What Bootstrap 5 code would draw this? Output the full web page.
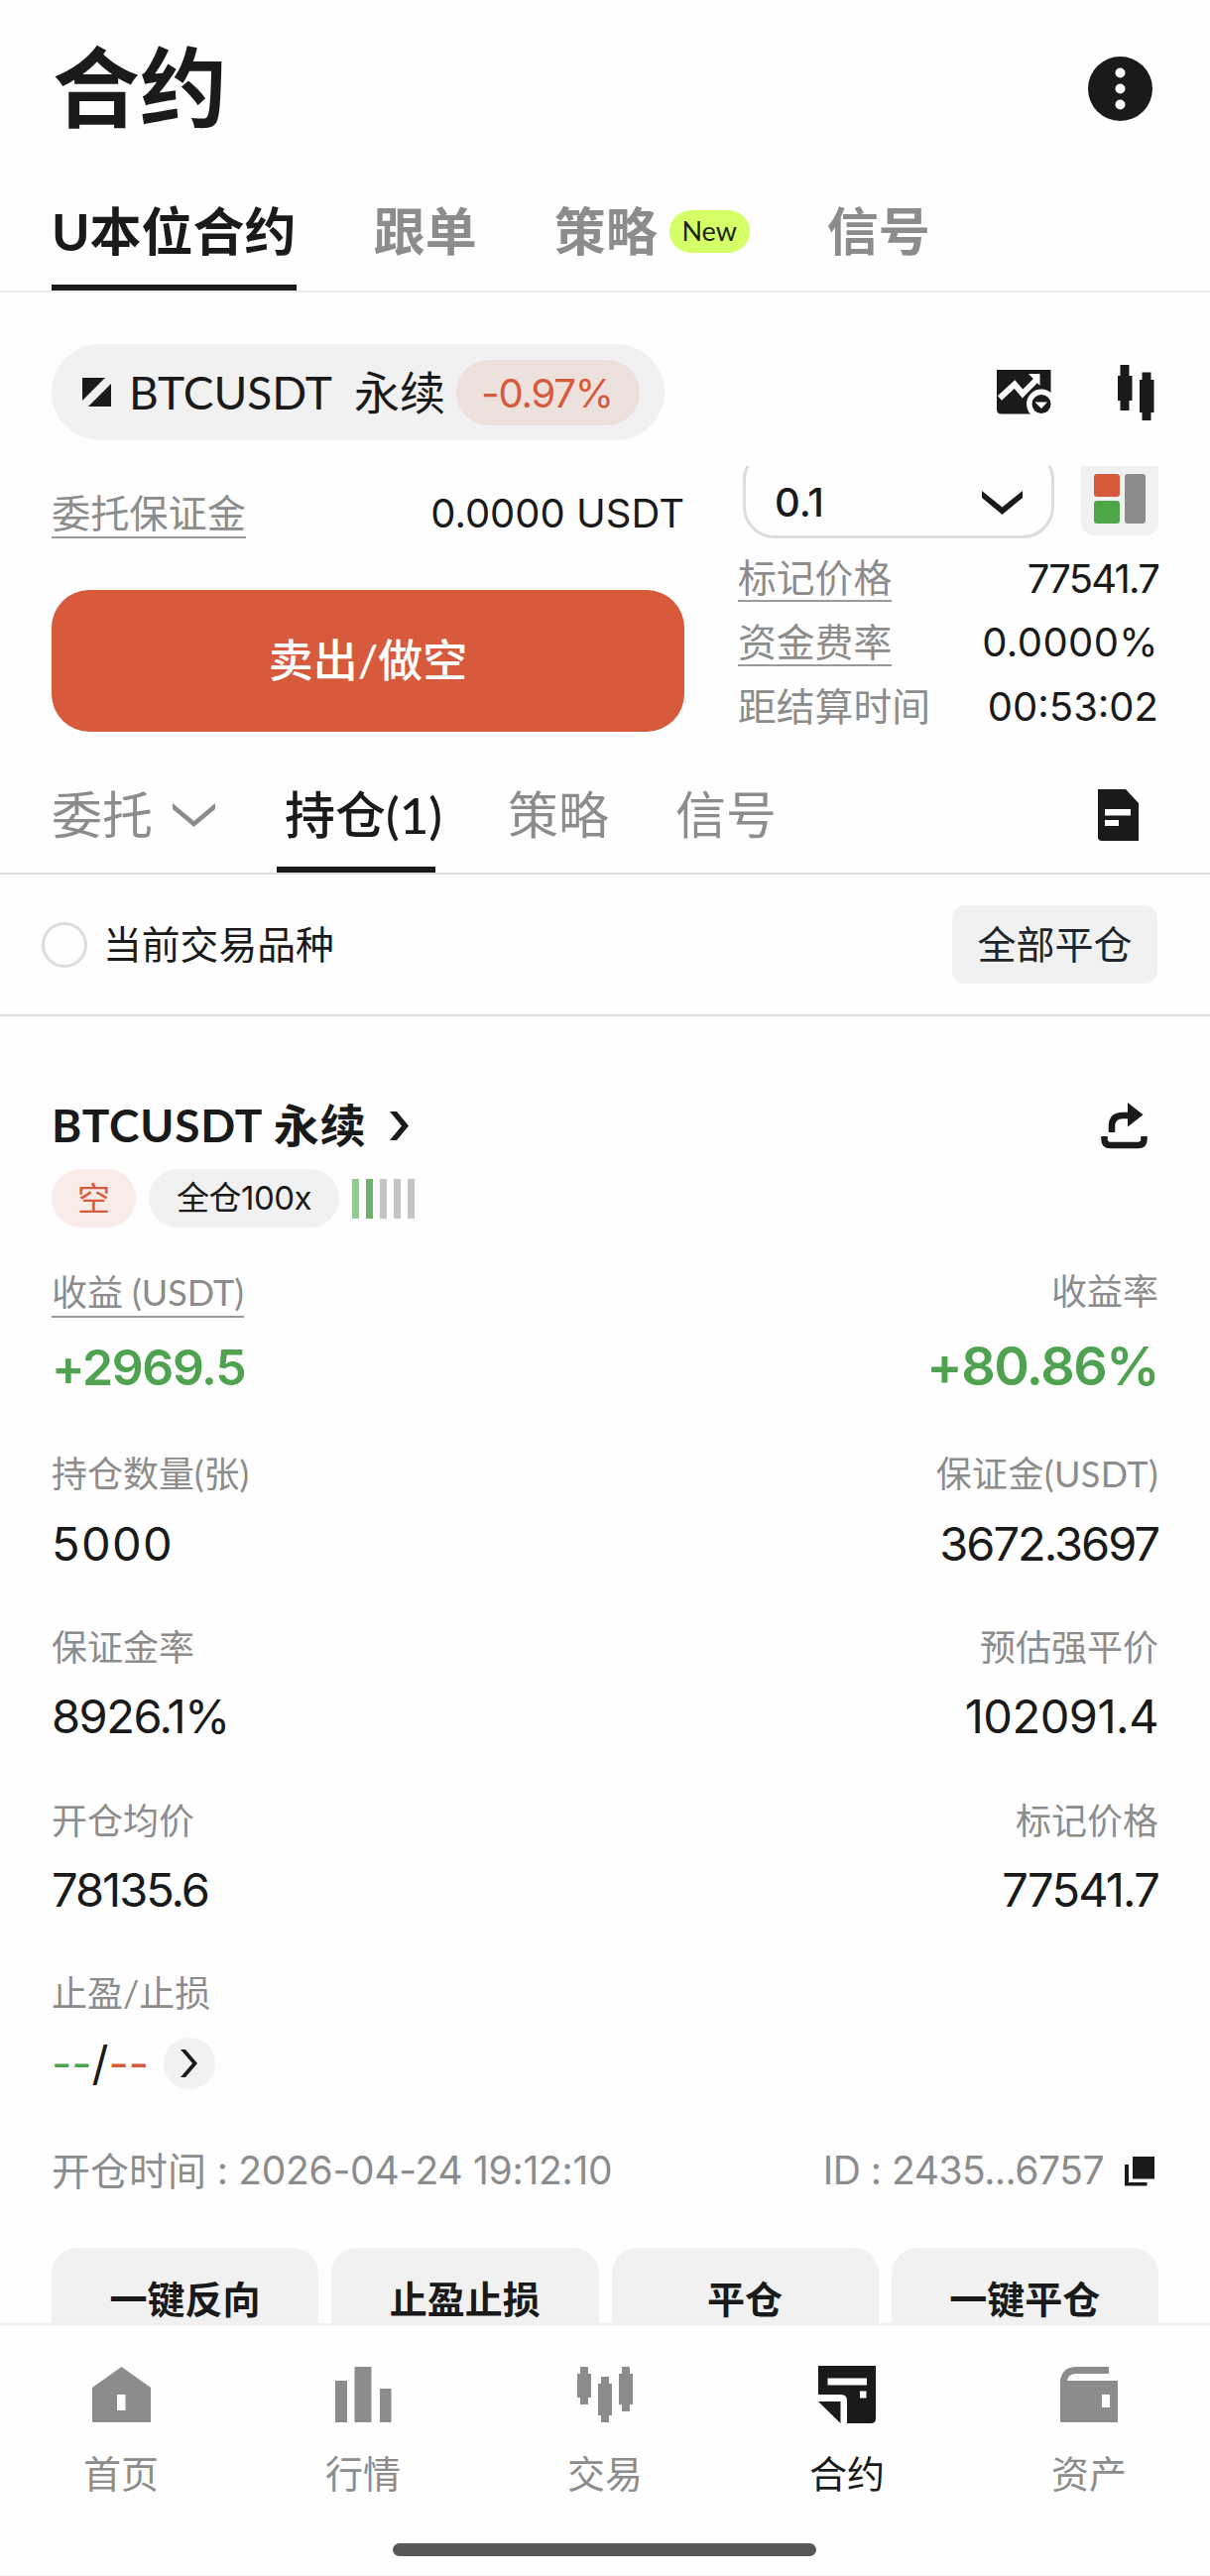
<!DOCTYPE html>
<html lang="zh-CN">
<head>
<meta charset="utf-8">
<meta name="viewport" content="width=device-width, initial-scale=1">
<title>合约</title>
<link href="https://cdn.jsdelivr.net/npm/bootstrap@5.3.0/dist/css/bootstrap.min.css" rel="stylesheet">
<style>
:root{--ink:#1a1a1a;--dim:#8c8c8c;--soft:#f1f1f1;--up:#4fa24f;--down:#d65a3b}
body{font-family:Lato,"Noto Sans CJK SC",sans-serif;color:var(--ink);background:#fefefe;line-height:1.2;overflow:hidden}
svg{display:block;flex:none;fill:currentColor}
.num{font-family:Inter,"Noto Sans CJK SC",sans-serif}
.phone{width:1220px;height:2598px}
.screen{height:2343px;overflow:hidden}
.gut{padding-left:52px;padding-right:52px}
.dim{color:var(--dim)}
.ink{color:var(--ink)}
.up{color:var(--up)}
.down{color:var(--down)}
/* header */
.top{height:178px;padding-right:58px}
.top h1{font-size:88px;font-weight:700;line-height:1;padding:0 0 4px 1px}
.tabs-main{height:117px;border-bottom:2px solid #eee;gap:78px}
.tabs-main a,.tabs-sub a{color:var(--dim);text-decoration:none;border-bottom:6px solid transparent;white-space:nowrap}
.tabs-main a{font-size:52px;font-weight:700;height:115px;padding-top:2px}
.tabs-main a.on,.tabs-sub a.on{color:var(--ink);border-color:var(--ink)}
.tag-new{font-size:27px;font-weight:400;color:#1c2410;background:#d5ff66;width:81px;height:43px;border-radius:22px;margin-left:12px}
/* pair */
.pairrow{padding-top:52px}
.pairpill{height:97px;width:618px;border-radius:49px;background:var(--soft);padding-left:31px;padding-right:25px;font-size:46px}
.pairname{margin-left:18px}
.chg{width:185px;height:66px;border-radius:33px;background:#ede1de;font-size:40px;letter-spacing:-1.2px;padding:3px 2px 0 0}
.candles{margin-left:67px}
/* trade */
.trade{padding-top:26px;height:294px}
.colL{width:638px}
.margin{height:96px;margin-bottom:29px;font-size:40px}
.lbl{font-size:39.2px}
.dotted{border-bottom:2px solid #999}
.sell{height:143px;border-radius:38px;background:var(--down);color:#fff;font-size:45px;font-weight:500}
.colR{width:424px}
.clip{height:73px;overflow:hidden}
.picker{width:314px;height:91px;margin-top:-18px;border:3px solid #dcdcdc;border-radius:32px;padding:18px 29px 0 29px;font-size:40px;font-weight:500;margin-left:5px}
.gridbtn{width:78px;height:88px;margin-top:-18px;border-radius:14px;background:var(--soft);padding:26px 0 0 13px}
.info{height:64.7px;font-size:38.8px;line-height:1.16}
.info .num{font-size:40px;padding-top:1px}
.infos{padding-top:8px}
/* lower tabs */
.tabs-sub{height:144px;border-bottom:2px solid #dedede;font-size:51px;padding-right:72px}
.tabs-sub a{height:142px;padding-top:31px}
.tabs-sub .arrow{margin-left:20px}
.tabs-sub .cur{margin-left:62px;width:160px;padding-left:8px}
.tabs-sub .nxt{margin-left:73px}
.tabs-sub .nxt2{margin-left:67px}
.docicon{margin-top:58px}
.filter{height:143px;border-bottom:2px solid #dedede;padding:0 53px 0 42px;font-size:38.8px}
.ring{width:46px;height:46px;border:3px solid #dcdcdc;border-radius:50%;margin-right:16px}
.closeall{width:207px;height:79px;border-radius:13px;background:var(--soft);font-size:39px}
/* position */
.phead{height:88px;margin-top:66px;padding-right:10px;font-size:46px;font-weight:700}
.phead span{letter-spacing:.8px}
.chips{height:59px;margin-bottom:40px;font-size:33px}
.chip{border-radius:30px;height:59px;background:var(--soft)}
.chip-s{width:85px;background:#f8ebe8;margin-right:13px}
.chip-l{width:192px;margin-right:13px}
.lv{gap:7px}
.lv i{display:block;width:7px;height:40px;background:#c4c4c4}
.lv i.a{background:#8ecf8e}.lv i.b{background:#68b368}
.stat{height:174.7px;font-size:36px}
.stat.first{height:184px}
.stat .k{height:50px}
.stat .v{height:90px;font-size:47px}
.stat.first .v{height:101px;font-weight:600}
.stat.first .big1{font-size:50px;letter-spacing:-1.4px}
.stat.first .big2{font-size:54px;letter-spacing:-1.5px}
.pnl{margin-top:5px;padding-bottom:2px}
.dashes{font-size:44px}
.go{width:52px;height:52px;border-radius:50%;background:var(--soft);margin-left:15px}
.timerow{height:66px;margin-top:-4px;font-size:39px}
.tm{white-space:pre}
.cp{margin-left:21px;margin-right:4px}
.acts{margin-top:44px;gap:13px}
.acts .btn{height:104px;border-radius:26px;background:var(--soft);font-size:38px;font-weight:700;color:var(--ink);border:0;padding:0}
/* bottom bar */
.dock{height:255px;border-top:2px solid #f0f0f0;border-bottom:1px solid #f3f3f3;position:relative}
.dock a{width:244px;padding-top:41px;color:var(--dim);text-decoration:none;font-size:38px}
.dock a.on{color:var(--ink)}
.dock svg{margin-bottom:28px}
.homebar{width:427px;height:13px;border-radius:7px;background:#585858;bottom:19px;left:396px}
/* tracking */
.s3{letter-spacing:-.3px}.s5{letter-spacing:-.5px}.s15{letter-spacing:-1.5px}.s17{letter-spacing:-1.8px}.s20{letter-spacing:-2px}.p15{letter-spacing:1.4px}.p4{letter-spacing:.4px}
</style>
<script src="https://cdn.jsdelivr.net/npm/bootstrap@5.3.0/dist/js/bootstrap.bundle.min.js"></script>
</head>
<body>
<div class="phone d-flex flex-column">
<main class="screen">
  <header class="top gut d-flex align-items-center justify-content-between">
    <h1 class="m-0">合约</h1>
    <svg width="65" height="65" viewBox="0 0 65 65"><circle cx="32.5" cy="32.5" r="32.5"/><g fill="#fff"><circle cx="32.5" cy="16.5" r="5"/><circle cx="32.5" cy="32.5" r="5"/><circle cx="32.5" cy="48.5" r="5"/></g></svg>
  </header>
  <nav class="tabs-main gut d-flex">
    <a href="#" class="on d-flex align-items-center">U本位合约</a>
    <a href="#" class="d-flex align-items-center">跟单</a>
    <a href="#" class="d-flex align-items-center">策略<span class="tag-new d-flex align-items-center justify-content-center">New</span></a>
    <a href="#" class="d-flex align-items-center">信号</a>
  </nav>

  <section class="pairrow gut d-flex align-items-center justify-content-between">
    <div class="pairpill d-flex align-items-center">
      <svg width="29" height="29" viewBox="0 0 29 29"><path d="M0 0H23L0 23zM29 6V29H6z"/></svg>
      <span class="pairname text-nowrap">BTCUSDT&nbsp; 永续</span>
      <span class="chg num down ms-auto d-flex align-items-center justify-content-center">-0.97%</span>
    </div>
    <div class="d-flex align-items-center pe-1">
      <svg width="55" height="46" viewBox="0 0 55 46"><path d="M0 0H54.5V44.500H5Q0 44.500 0 40z"/><path d="M3 28.500L18 14.500 26 24 40 10" fill="none" stroke="#fff" stroke-width="6"/><path d="M32 4H43.500V16z" fill="#fff"/><circle cx="45" cy="34.500" r="15" fill="#fff"/><circle cx="45" cy="34.500" r="9.500"/><path d="M38.500 32.500H51L45 39z" fill="#fff"/></svg>
      <svg class="candles" width="37" height="56" viewBox="0 0 37 56"><path d="M2.500 0h9v11H14.500V36h-3V46h-9V36H0V11H2.500zM24.500 7.500h9V15H36.500V48h-3v8h-9V48H22V15h2.500z"/></svg>
    </div>
  </section>

  <section class="trade gut d-flex justify-content-between">
    <div class="colL">
      <div class="margin d-flex align-items-center justify-content-between">
        <span class="lbl dim dotted">委托保证金</span><span class="num">0.0000 USDT</span>
      </div>
      <button class="sell btn w-100 p-0">卖出/做空</button>
    </div>
    <div class="colR">
      <div class="clip d-flex justify-content-between">
        <div class="picker num d-flex align-items-center justify-content-between">0.1
          <svg width="41" height="24" viewBox="0 0 41 24"><path d="M0 0V7L20.500 24 41 7V0L20.500 16.500z"/></svg></div>
        <div class="gridbtn"><svg width="52" height="51" viewBox="0 0 52 51"><rect width="26" height="23" rx="3" fill="#d65a3b"/><rect y="27" width="26" height="23" rx="3" fill="#4fa647"/><rect x="31" width="21" height="50" rx="3" fill="#8c8c8c"/></svg></div>
      </div>
      <div class="infos">
        <div class="info d-flex align-items-center justify-content-between"><span class="dim dotted">标记价格</span><span class="num s17">77541.7</span></div>
        <div class="info d-flex align-items-center justify-content-between"><span class="dim dotted">资金费率</span><span class="num p4">0.0000%</span></div>
        <div class="info d-flex align-items-center justify-content-between"><span class="dim">距结算时间</span><span class="num">00:53:02</span></div>
      </div>
    </div>
  </section>

  <nav class="tabs-sub gut d-flex">
    <a href="#" class="d-flex align-items-center">委托<svg class="arrow" width="43" height="24" viewBox="0 0 43 24"><path d="M0 0V6L21.500 24 43 6V0L21.500 18z"/></svg></a>
    <a href="#" class="on d-flex align-items-center fw-medium cur">持仓(1)</a>
    <a href="#" class="d-flex align-items-center nxt">策略</a>
    <a href="#" class="d-flex align-items-center nxt2">信号</a>
    <svg class="ms-auto docicon" width="41" height="52" viewBox="0 0 41 52"><path d="M0 0H28L41 14V52H4Q0 52 0 48z"/><path d="M7 20H33V26.500H7zM7 31H21V37H7z" fill="#fff"/></svg>
  </nav>

  <section class="filter d-flex align-items-center">
    <span class="ring"></span><span>当前交易品种</span>
    <button class="closeall btn p-0 ms-auto">全部平仓</button>
  </section>

  <section class="gut">
    <div class="phead d-flex align-items-center">
      <span>BTCUSDT 永续</span>
      <svg class="ms-4" width="19" height="29" viewBox="0 0 19 29"><path d="M0 0H7L19 14.500 7 29H0L12 14.500z"/></svg>
      <svg class="ms-auto" width="48" height="47" viewBox="0 0 48 47"><path d="M27 0L42.500 12.300 27 24.500z"/><path d="M11 30V24Q11 13 22 13H29M3.500 34v3q0 6 6 6h28q6 0 6-6v-3" fill="none" stroke="currentColor" stroke-width="6.500"/></svg>
    </div>
    <div class="chips d-flex align-items-center">
      <span class="chip chip-s down d-flex align-items-center justify-content-center">空</span>
      <span class="chip chip-l num s5 d-flex align-items-center justify-content-center">全仓100x</span>
      <span class="lv d-flex"><i class="a"></i><i class="b"></i><i></i><i></i><i></i></span>
    </div>

    <div class="stat first">
      <div class="k dim d-flex align-items-center justify-content-between"><span class="dotted pnl">收益 (USDT)</span><span>收益率</span></div>
      <div class="v num up d-flex align-items-center justify-content-between"><span class="big1">+2969.5</span><span class="big2">+80.86%</span></div>
    </div>
    <div class="stat">
      <div class="k dim d-flex align-items-center justify-content-between"><span>持仓数量(张)</span><span class="p4">保证金(USDT)</span></div>
      <div class="v num d-flex align-items-center justify-content-between"><span class="p15">5000</span><span class="s20">3672.3697</span></div>
    </div>
    <div class="stat">
      <div class="k dim d-flex align-items-center justify-content-between"><span>保证金率</span><span>预估强平价</span></div>
      <div class="v num d-flex align-items-center justify-content-between"><span class="s15">8926.1%</span><span class="s5">102091.4</span></div>
    </div>
    <div class="stat">
      <div class="k dim d-flex align-items-center justify-content-between"><span>开仓均价</span><span>标记价格</span></div>
      <div class="v num d-flex align-items-center justify-content-between"><span class="s20">78135.6</span><span class="s17">77541.7</span></div>
    </div>
    <div class="stat">
      <div class="k dim d-flex align-items-center"><span>止盈/止损</span></div>
      <div class="v num d-flex align-items-center"><span class="up dashes">--</span><span>/</span><span class="down dashes">--</span>
        <span class="go d-flex align-items-center justify-content-center"><svg width="17" height="28" viewBox="0 0 17 28"><path d="M0 0H5L17 14 5 28H0L12 14z"/></svg></span></div>
    </div>
    <div class="timerow dim d-flex align-items-center">
      <span>开仓时间</span><span class="num s3 tm">&nbsp;: 2026-04-24 19:12:10</span>
      <span class="num s5 ms-auto tm">ID : 2435...6757</span>
      <svg class="ink cp" width="30" height="30" viewBox="0 0 30 30"><path d="M8 0H30V22.500H8zM0 8H4V26H22.500V29.500H0z"/></svg>
    </div>
    <div class="acts d-flex">
      <button class="btn flex-fill w-25">一键反向</button><button class="btn flex-fill w-25">止盈止损</button><button class="btn flex-fill w-25">平仓</button><button class="btn flex-fill w-25">一键平仓</button>
    </div>
  </section>
</main>

<nav class="dock d-flex">
  <a href="#" class="d-flex flex-column align-items-center"><svg width="59" height="58" viewBox="0 -1 59 58"><path fill-rule="evenodd" d="M29.500 0L59 21V56H0V21zM25 28V44H33.500V28z"/></svg>首页</a>
  <a href="#" class="d-flex flex-column align-items-center"><svg width="57" height="58" viewBox="0 -1 57 58"><path d="M0 14H12V56H0zM19.500 0H36.500V56H19.500zM45 22H56.500V56H45z"/></svg>行情</a>
  <a href="#" class="d-flex flex-column align-items-center"><svg width="57" height="58" viewBox="0 -1 57 58"><path d="M3 0h8V7h3V31h-3v7H3V31H0V7H3zM24 10h8v7h3V49h-3v7H24V49H21V17h3zM45 0h8V7h3V38h-3v7H45V38H42V7h3z"/></svg>交易</a>
  <a href="#" class="on d-flex flex-column align-items-center"><svg width="58" height="58" viewBox="0 0 58 58"><path fill-rule="evenodd" d="M0 0H58V53Q58 58 53 58H29V35Q29 29 23 29H0zM9.500 12.500V19.500H49V12.500zM42 25.500V32.500H48.500V25.500z"/><path d="M0 36H22.500V58z"/></svg>合约</a>
  <a href="#" class="d-flex flex-column align-items-center"><svg width="58" height="58" viewBox="0 -1 58 58"><path fill-rule="evenodd" d="M49 0V7H15Q8 7.500 7 14H58V56H0V15Q1 1 15 0zM42 28V41H50V28z"/></svg>资产</a>
  <div class="homebar position-absolute"></div>
</nav>
</div>
</body>
</html>
